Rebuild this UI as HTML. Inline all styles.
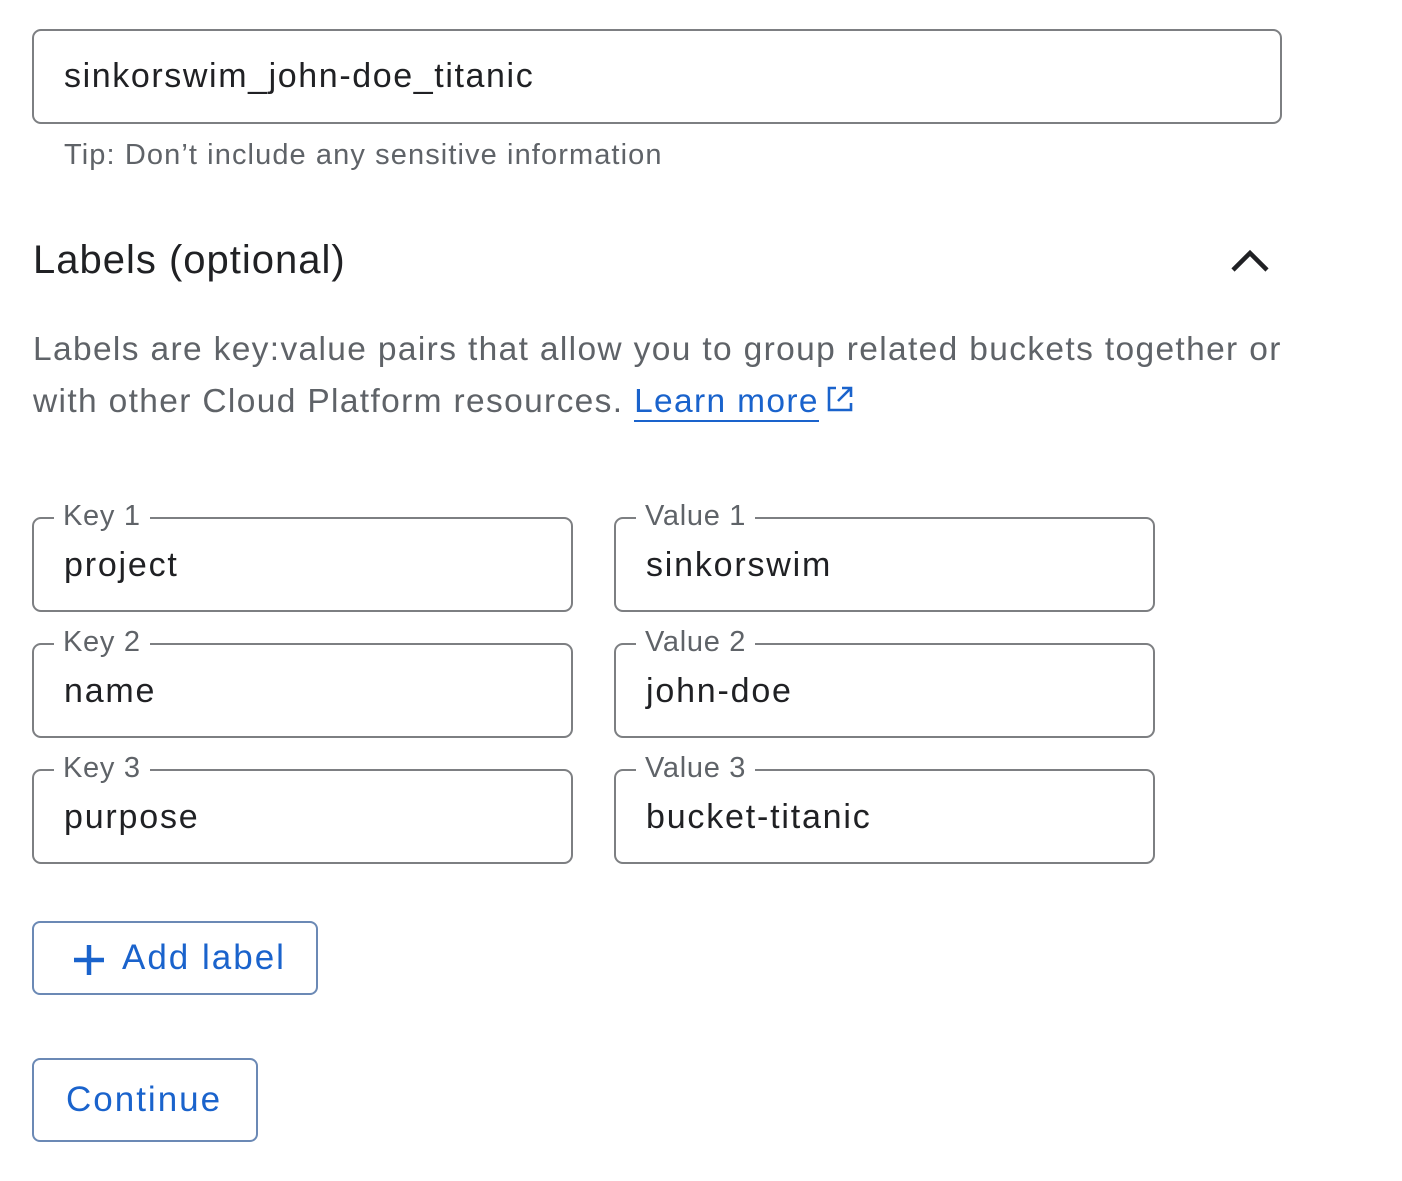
<!DOCTYPE html>
<html><head><meta charset="utf-8"><style>
body{margin:0;width:1402px;height:1181px;background:#fff;position:relative;font-family:"Liberation Sans",Arial,sans-serif;overflow:hidden}
.a{position:absolute;white-space:nowrap}
.box{position:absolute;border:2px solid #7d7f82;border-radius:9px;box-sizing:border-box}
.lbl{position:absolute;background:#fff;padding:0 9px;font-size:29px;color:#5f6368;line-height:34px;letter-spacing:0.7px}
.val{position:absolute;font-size:34px;color:#202124;line-height:40px;letter-spacing:1.8px}
.btn{position:absolute;border:2px solid #6b89b5;border-radius:8px;box-sizing:border-box;color:#1a63cc;font-size:35px;letter-spacing:2px}
</style></head><body>
<div class="box" style="left:32px;top:29px;width:1250px;height:95px"></div>
<div class="a" style="left:64px;top:56px;font-size:34px;color:#202124;line-height:40px;letter-spacing:1.6px">sinkorswim_john-doe_titanic</div>
<div class="a" style="left:64px;top:138px;font-size:29px;color:#5f6368;line-height:34px;letter-spacing:1.1px">Tip: Don’t include any sensitive information</div>
<div class="a" style="left:33px;top:237px;font-size:40px;color:#202124;line-height:46px;letter-spacing:1px">Labels (optional)</div>
<svg class="a" style="left:1228px;top:244px" width="44" height="32" viewBox="0 0 44 32"><path d="M5 26 L22 9 L39 26" fill="none" stroke="#202124" stroke-width="4.5"/></svg>
<div class="a" style="left:33px;top:324px;font-size:33.5px;color:#5f6368;line-height:52px;letter-spacing:1.35px">Labels are key:value pairs that allow you to group related buckets together or<br>with other Cloud Platform resources. <span style="color:#1a63cc;border-bottom:2px solid #1a63cc">Learn more</span><svg width="30" height="30" viewBox="0 0 30 30" style="vertical-align:-2px;margin-left:6px"><path d="M11 4H4v22h22v-7" fill="none" stroke="#1a63cc" stroke-width="2.6"/><path d="M17 4h9v9M26 4L13 17" fill="none" stroke="#1a63cc" stroke-width="2.6"/></svg></div>

<div class="box" style="left:32px;top:517px;width:541px;height:95px"></div>
<div class="lbl" style="left:54px;top:499px">Key 1</div>
<div class="val" style="left:64px;top:545px">project</div>
<div class="box" style="left:614px;top:517px;width:541px;height:95px"></div>
<div class="lbl" style="left:636px;top:499px">Value 1</div>
<div class="val" style="left:646px;top:545px">sinkorswim</div>

<div class="box" style="left:32px;top:643px;width:541px;height:95px"></div>
<div class="lbl" style="left:54px;top:625px">Key 2</div>
<div class="val" style="left:64px;top:671px">name</div>
<div class="box" style="left:614px;top:643px;width:541px;height:95px"></div>
<div class="lbl" style="left:636px;top:625px">Value 2</div>
<div class="val" style="left:646px;top:671px">john-doe</div>

<div class="box" style="left:32px;top:769px;width:541px;height:95px"></div>
<div class="lbl" style="left:54px;top:751px">Key 3</div>
<div class="val" style="left:64px;top:797px">purpose</div>
<div class="box" style="left:614px;top:769px;width:541px;height:95px"></div>
<div class="lbl" style="left:636px;top:751px">Value 3</div>
<div class="val" style="left:646px;top:797px">bucket-titanic</div>

<div class="btn" style="left:32px;top:921px;width:286px;height:74px">
<svg class="a" style="left:38px;top:20px" width="34" height="34" viewBox="0 0 34 34"><path d="M17 2v30M2 17h30" stroke="#1a63cc" stroke-width="4.5"/></svg>
<span class="a" style="left:88px;top:15px;line-height:40px">Add label</span></div>
<div class="btn" style="left:32px;top:1058px;width:226px;height:84px">
<span class="a" style="left:32px;top:20px;line-height:40px">Continue</span></div>
</body></html>
